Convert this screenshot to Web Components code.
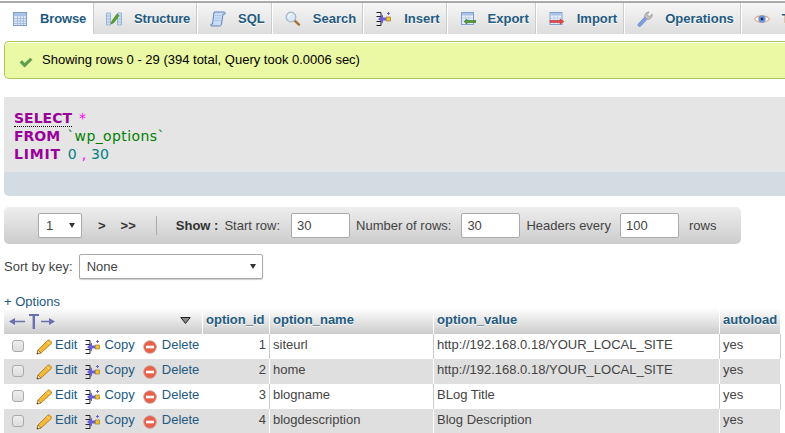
<!DOCTYPE html>
<html><head><meta charset="utf-8">
<style>
html,body{margin:0;padding:0;background:#fff;overflow:hidden;width:785px;height:433px}
body{font:13px "Liberation Sans",Arial,sans-serif;color:#444}
</style></head><body>
<pma-tabs>
<pma-tab active label="Browse" icon="browse" style="--pl:12px;letter-spacing:-.15px"></pma-tab>
<pma-tab label="Structure" icon="structure" style="letter-spacing:-.2px"></pma-tab>
<pma-tab label="SQL" icon="sql"></pma-tab>
<pma-tab label="Search" icon="search"></pma-tab>
<pma-tab label="Insert" icon="insert"></pma-tab>
<pma-tab label="Export" icon="export"></pma-tab>
<pma-tab label="Import" icon="import"></pma-tab>
<pma-tab label="Operations" icon="ops"></pma-tab>
<pma-tab label="Tracking" icon="eye"></pma-tab>
</pma-tabs>
<pma-message>Showing rows 0 - 29 (394 total, Query took 0.0006 sec)</pma-message>
<pma-sql></pma-sql>
<pma-nav></pma-nav>
<pma-sort></pma-sort>
<pma-options></pma-options>
<pma-table></pma-table>
<script>
const INS=`<svg width="16" height="16" viewBox="0 0 16 16"><path d="M.5 1.500H5V5.500H.5M.5 10.500H5V14.500H.5" fill="none" stroke="#222" stroke-width="1"/><path d="M2 8l5-4.500V6.500h3v3H7v3z" fill="#6a5fd0"/><rect x="10.500" y="6" width="4" height="4" fill="#f4c430" stroke="#8a6d10" stroke-width=".6"/><path d="M12.500 1v3M11 2.500h3" stroke="#6a5fd0"/></svg>`;
const ICONS={
browse:`<svg width="16" height="16" viewBox="0 0 16 16"><rect x="1.500" y="1.500" width="13" height="13" fill="#dbe7f6" stroke="#7f9fcc"/><rect x="2" y="2" width="12" height="3" fill="#a9c3e6"/><path d="M2 7.500h12M2 10h12M2 12.500h12M5.500 5v9M8.500 5v9M11.500 5v9" stroke="#9db7da" stroke-width=".8"/></svg>`,
structure:`<svg width="16" height="16" viewBox="0 0 16 16"><path d="M.5 2h4v12h-4zM11.500 2h4v12h-4z" fill="#cfe0f5" stroke="#8aa7cf" stroke-width=".8"/><path d="M.5 5h4M.5 8h4M.5 11h4M11.500 5h4M11.500 8h4M11.500 11h4" stroke="#8aa7cf" stroke-width=".7"/><path d="M5 13l3-1.500 5-7-2-1.500-5 7z" fill="#5aa02c" stroke="#3d7a1c" stroke-width=".6"/></svg>`,
sql:`<svg width="16" height="16" viewBox="0 0 16 16"><path d="M4 1h10c1.200 0 1.700 1.200.8 2.200H13l-1.500 10c-.2 1.200-1 1.800-2 1.800H1.500c-1 0-1.200-1.200-.3-1.800H2.500z" fill="#c9dcf5" stroke="#4d78b8" stroke-width=".9"/><path d="M5 4.500h6M4.600 7h6M4.200 9.500h6" stroke="#a3bde0" stroke-width=".7"/></svg>`,
search:`<svg width="16" height="16" viewBox="0 0 16 16"><path d="M9.500 9.500l4.500 4.200" stroke="#a8743a" stroke-width="2.400" stroke-linecap="round"/><circle cx="6" cy="6" r="4.800" fill="#dbeafa" stroke="#a6b4c4" stroke-width="1.300"/><path d="M3.500 5.500a3 3 0 0 1 3-2.500" stroke="#fff" fill="none"/></svg>`,
insert:INS,
export:`<svg width="16" height="16" viewBox="0 0 16 16"><rect x="1.500" y="1.500" width="12" height="12" fill="#e6eefa" stroke="#7f9fcc"/><rect x="2" y="2" width="11" height="2.500" fill="#a9c3e6"/><path d="M2 7h11M2 10h11M5.500 4.500v9M9 4.500v9" stroke="#b3c6e0" stroke-width=".7"/><path d="M16 9.500H7V8L4 10.500 7 13v-1.500h9z" fill="#4f9a35" stroke="#2e6b1d" stroke-width=".5"/></svg>`,
import:`<svg width="16" height="16" viewBox="0 0 16 16"><rect x="1" y="1.500" width="12" height="12" fill="#e6eefa" stroke="#7f9fcc"/><rect x="1.500" y="2" width="11" height="2.500" fill="#a9c3e6"/><path d="M1.500 7h11M1.500 10h11M5 4.500v9M8.500 4.500v9" stroke="#b3c6e0" stroke-width=".7"/><path d="M1 9.500h10V8l4 2.500-4 2.500v-1.500H1z" fill="#e8464a" stroke="#b52226" stroke-width=".5"/></svg>`,
ops:`<svg width="16" height="16" viewBox="0 0 16 16"><path d="M1 13.200L8 5.800l2.300 2.300-7 7.300c-1.300.7-2.900-.8-2.300-2.200z" fill="#7d9fe0" stroke="#6b86b8" stroke-width=".7"/><path d="M7.800 6.200C7.300 3.400 9 1 12 1l-1.800 2.400.9 1.800 2.200.2L15 3c.7 3-1.300 5.500-4.500 5.200z" fill="#c4c4c4" stroke="#8e8e8e" stroke-width=".7"/></svg>`,
eye:`<svg width="16" height="16" viewBox="0 0 16 16"><path d="M.5 8C3 3.800 13 3.800 15.500 8 13 12.200 3 12.200 .5 8z" fill="#fff" stroke="#d9a987" stroke-width="1.100"/><circle cx="8" cy="8" r="3.700" fill="#6c93d8"/><circle cx="8" cy="8" r="1.400" fill="#1a2a55"/></svg>`,
check:`<svg width="14" height="14" viewBox="0 0 16 16"><path d="M1 8.500l2.500-2.200 3 3L13 3.500l2 2-8.500 8.500z" fill="#5fa04e" stroke="#4a8a3b" stroke-width=".5"/></svg>`,
pencil:`<svg width="16" height="16" viewBox="0 0 16 16"><path d="M1 15l1-4L11.500 1.500c.8-.8 2-.6 2.600.1l.8.8c.7.700.7 1.800 0 2.500L5 14z" fill="#f5b93a" stroke="#a66f12" stroke-width=".8"/><path d="M11 2.500l2.500 2.500" stroke="#fbe39a"/><path d="M1 15l1-4 3 3z" fill="#f3dcae" stroke="#7b4e10" stroke-width=".5"/><path d="M1 15l.4-1.600 1.200 1.200z" fill="#333"/></svg>`,
del:`<svg width="14" height="14" viewBox="0 0 14 14"><circle cx="7" cy="7" r="6.300" fill="#e8604a" stroke="#c4a09a" stroke-width=".8"/><rect x="3" y="5.700" width="8" height="2.600" fill="#fff"/></svg>`,
};
function def(name,css,html){
  customElements.define(name,class extends HTMLElement{
    connectedCallback(){
      if(this.shadowRoot)return;
      const s=this.attachShadow({mode:'open'});
      s.innerHTML=`<style>${css}</style>`+(typeof html==='function'?html(this):html);
    }
  });
}
def('pma-tabs',`:host{display:flex;height:31px;box-sizing:content-box;border-top:2px solid #aaa;margin-top:1px;background:linear-gradient(#f6f6f6,#ddd);overflow:hidden;white-space:nowrap;width:785px}`,`<slot></slot>`);
def('pma-tab',`:host{display:flex;align-items:center;gap:12px;flex:none;padding:0 7px 0 var(--pl,12px);border-right:1px solid #fff;box-shadow:inset -1px 0 0 #ccc;
 font:bold 13px "Liberation Sans",Arial,sans-serif;color:#235a81;text-shadow:0 1px 0 #fff}
 :host([active]){background:#fff;border-right-color:#ccc;box-shadow:none}
 svg{display:block;flex:none}`,
 h=>ICONS[h.getAttribute('icon')]+`<span>${h.getAttribute('label')}</span>`);
def('pma-message',`:host{display:flex;align-items:center;gap:9px;box-sizing:border-box;height:38px;margin:7px 0 0 4px;padding:0 0 0 14px;border:1px solid #a9c95c;border-right:none;border-radius:5px 0 0 5px;background:#ebf8a4;box-shadow:inset 0 1px 0 #fff;color:#000;font-size:13px}
 svg{display:block;margin-top:3px}span{margin-top:-1px}`,
 ()=>ICONS.check+`<span><slot></slot></span>`);
def('pma-sql',`:host{display:block;margin:18px 0 0 4px;height:99px;border-radius:0 0 0 5px;overflow:hidden;background:#d3dce3}
 pre{margin:0;box-sizing:border-box;height:75px;padding:12px 0 0 10px;background:#e5e5e5;font:14px/18px "DejaVu Sans",Verdana,sans-serif;color:#000;word-spacing:2.500px}
 b{color:#990099}
 u{text-decoration:none;border-bottom:1px dotted #000}
 .o{color:#f0f}.v{color:green;letter-spacing:.4px}.n{color:#008080}.l{letter-spacing:.8px}.t{word-spacing:.5px}`,
 `<pre><b><u>SELECT</u></b> <span class="o">*</span>
<b>FROM</b> <span class="v">\`wp_options\`</span>
<b class="l">LIMIT</b> <span class="t"><span class="n">0</span> <span class="o">,</span> <span class="n">30</span></span></pre>`);
def('pma-field',`:host{display:inline-flex;box-sizing:border-box;height:25px;align-items:center;flex:none;background:#fff;border:1px solid #aaa;border-radius:2px;padding:0 5px;color:#444;font-size:13px;width:var(--w,59px)}`,`<slot></slot>`);
def('pma-select',`:host{display:inline-flex;box-sizing:border-box;height:25px;align-items:center;justify-content:space-between;flex:none;background:#fff;border:1px solid #aaa;border-radius:2px;padding:0 6px 0 7px;color:#444;font-size:13px;width:var(--w,44px);box-shadow:0 1px 1px #ccc}
 i{display:block;width:0;height:0;border:3px solid transparent;border-top:5px solid #333;border-bottom:0;margin-top:-1px}`,`<slot></slot><i></i>`);
def('pma-nav',`:host{display:flex;align-items:center;box-sizing:border-box;height:37px;width:737px;margin:11px 0 0 4px;padding-left:34px;border-radius:5px;background:linear-gradient(#eee,#ccc);color:#444;font-size:13px;white-space:nowrap}
 .a{font-weight:bold;color:#333;font-size:13px}
 .s{width:1px;height:19px;background:#aaa;margin:0 19px 0 20px}
 strong{color:#333;margin-right:6px;font-size:13px}
 pma-field{margin:0 6px 0 11px}
 .l{margin-left:4px}`,
 `<pma-select style="--w:44px">1</pma-select><span class="a" style="margin-left:16px">&gt;</span><span class="a" style="margin-left:15px">&gt;&gt;</span><span class="s"></span><strong>Show :</strong><span>Start row:</span><pma-field>30</pma-field><span>Number of rows:</span><pma-field style="margin-left:10px">30</pma-field><span>Headers every</span><pma-field style="margin-left:9px">100</pma-field><span class="l">rows</span>`);
def('pma-sort',`:host{display:flex;align-items:center;gap:6px;margin:10px 0 0 4px;height:25px;color:#444;font-size:13px}`,`<span>Sort by key:</span><pma-select style="--w:184px">None</pma-select>`);
def('pma-options',`:host{display:block;margin:15px 0 0 4px;height:15px;line-height:15px;color:#235a81;font-size:13px}`,`+ Options`);
const ROWS=[[1,'siteurl','http://192.168.0.18/YOUR_LOCAL_SITE'],[2,'home','http://192.168.0.18/YOUR_LOCAL_SITE'],[3,'blogname','BLog Title'],[4,'blogdescription','Blog Description']];
def('pma-table',`:host{display:grid;grid-template-columns:199px 67px 164px 286px 61px;grid-template-rows:26px;grid-auto-rows:25px;margin:-1px 0 0 4px;width:777px;font-size:13px;color:#444}
 .h{display:flex;align-items:center;box-sizing:border-box;padding:0 2px 3px 3px;background:linear-gradient(#fff,#ccc);border-right:1px solid #fff;font-weight:bold;color:#235a81;text-shadow:0 1px 0 #fff;white-space:nowrap}
 .c{display:flex;align-items:center;box-sizing:border-box;padding:0 3px 5px;border-right:1px solid #ccc;white-space:nowrap}
 .even{background:#dfdfdf;border-right-color:#fff}
 .act{padding:0 0 0 8px;border-right:none;color:#235a81}
 .cb{width:12px;height:12px;box-sizing:border-box;border:1px solid #aaa;border-radius:3px;background:linear-gradient(#eee,#ddd);flex:none;margin:-1px 12px 0 0}
 .act svg{display:block;flex:none;margin-top:0}
 .act span{margin:-5px 8px 0 3px}
 .act span.cp{margin-left:3px;margin-right:8px}
 .act span.d{margin-left:5px;margin-right:0}
 .n{justify-content:flex-end}
 .first{padding:0 11px 0 4px;justify-content:space-between}
 .first svg{display:block}.first .tri{margin-top:-2px}`,
 ()=>{
   let h=`<div class="h first"><svg width="48" height="26" viewBox="0 0 48 26"><g fill="#6a6fb0"><path d="M1 13.500l6-3.500v2.800h10v1.400H7V17z"/><path d="M47 13.500l-6-3.500v2.800H33v1.400h8V17z"/><path d="M21 6h10v2h-4v13h-2.400V8H21z"/></g></svg><svg class="tri" width="11" height="7" viewBox="0 0 11 7"><path d="M.8.500h9.400L5.500 6.500z" fill="#888" stroke="#222"/></svg></div>
   <div class="h">option_id</div><div class="h">option_name</div><div class="h">option_value</div><div class="h">autoload</div>`;
   ROWS.forEach((r,i)=>{
     const e=i%2?' even':'';
     h+=`<div class="c act${e}"><i class="cb"></i>${ICONS.pencil}<span>Edit</span>${INS}<span class="cp">Copy</span>${ICONS.del}<span class="d">Delete</span></div>
     <div class="c n${e}">${r[0]}</div><div class="c${e}">${r[1]}</div><div class="c${e}">${r[2]}</div><div class="c${e}">yes</div>`;
   });
   return h;
 });
</script>
</body></html>
